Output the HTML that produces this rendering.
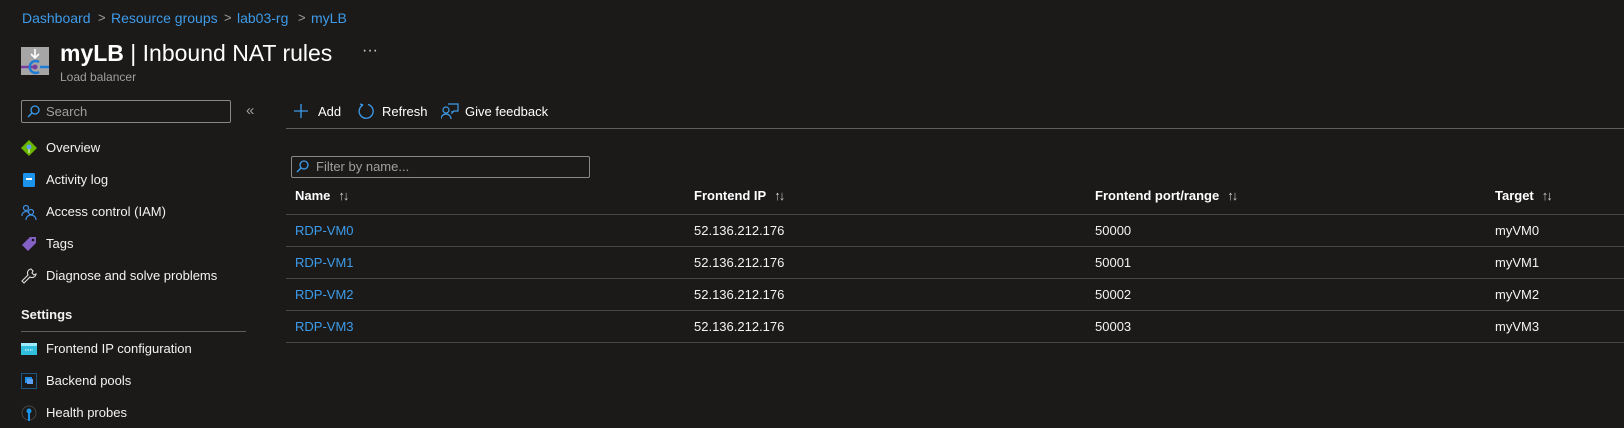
<!DOCTYPE html>
<html><head><meta charset="utf-8"><style>
*{margin:0;padding:0;box-sizing:border-box}
body{width:1624px;height:428px;overflow:hidden;background:#1b1a19;font-family:"Liberation Sans",sans-serif;color:#fff;position:relative;font-size:13px}
.a{position:absolute;white-space:nowrap}
.bc{color:#3d9be9;font-size:14px;top:10px}
.sep{color:#a19f9d;font-size:13px;top:10px}
.nav{left:46px;font-size:13px;color:#f3f2f1}
.ic{position:absolute;left:21px}
.hd{font-weight:bold;top:188px;font-size:13px;color:#fff}
.sort{color:#c8c6c4;font-weight:normal;margin-left:8px;letter-spacing:-2px}
.ln{position:absolute;left:286px;right:0;height:1px;background:#484644}
.c{position:absolute;font-size:13px;color:#f3f2f1}
.lk{color:#3d9be9}
</style></head><body>
<div class="a bc" style="left:22px">Dashboard</div><div class="a sep" style="left:98px">&gt;</div>
<div class="a bc" style="left:111px">Resource groups</div><div class="a sep" style="left:224px">&gt;</div>
<div class="a bc" style="left:237px">lab03-rg</div><div class="a sep" style="left:298px">&gt;</div>
<div class="a bc" style="left:311px">myLB</div>

<svg class="ic" style="top:47px" width="28" height="28" viewBox="0 0 28 28"><rect width="28" height="28" fill="#a6a6a6"/><path d="M14 2v9M10 7l4 4 4-4" stroke="#fff" stroke-width="1.6" fill="none"/><path d="M0 20h14" stroke="#773ea0" stroke-width="2.5"/><path d="M19 20h9" stroke="#1e7bd6" stroke-width="2.5"/><path d="M18 15a6 6 0 1 0 0 10" stroke="#1e7bd6" stroke-width="2.5" fill="none"/><circle cx="14" cy="20" r="2.5" fill="#773ea0"/></svg>
<div class="a" style="left:60px;top:40px;font-size:23px"><b>myLB</b> | Inbound NAT rules</div>
<div class="a" style="left:362px;top:42px;font-size:16px;color:#d0d0d0">···</div>
<div class="a" style="left:60px;top:70px;font-size:12px;color:#a19f9d">Load balancer</div>

<div class="a" style="left:21px;top:100px;width:210px;height:23px;border:1px solid #8a8886;border-radius:2px"></div>
<svg class="a" style="left:27px;top:105px" width="13" height="13"><circle cx="8" cy="5" r="4" stroke="#3d9be9" fill="none" stroke-width="1.3"/><path d="M5 8L1 12" stroke="#3d9be9" stroke-width="1.4"/></svg>
<div class="a" style="left:46px;top:104px;color:#a19f9d">Search</div>
<div class="a" style="left:246px;top:102px;color:#a19f9d;font-size:15px">«</div>

<svg class="ic" style="top:140px" width="16" height="16"><path d="M8 0L16 8 8 16 0 8z" fill="#6bb700"/><circle cx="8" cy="7" r="2.5" fill="#5ea0ef"/><path d="M8 9v4" stroke="#fff"/></svg>
<div class="a nav" style="top:140px">Overview</div>
<svg class="ic" style="top:172px" width="16" height="16"><rect x="2" y="1" width="12" height="14" rx="1.5" fill="#1b93eb"/><rect x="5" y="6" width="6" height="2" fill="#fff"/></svg>
<div class="a nav" style="top:172px">Activity log</div>
<svg class="ic" style="top:204px" width="16" height="16" fill="none" stroke="#3d8fe0" stroke-width="1.2"><circle cx="5" cy="4" r="2.5"/><path d="M1 12a4 4 0 0 1 7 -3"/><circle cx="10" cy="8" r="2.5"/><path d="M5 16a5 5 0 0 1 10 0"/></svg>
<div class="a nav" style="top:204px">Access control (IAM)</div>
<svg class="ic" style="top:236px" width="16" height="16"><path d="M1 9L9 1h6v6l-8 8z" fill="#8661c5"/><circle cx="12" cy="4" r="1.3" fill="#1b1a19"/></svg>
<div class="a nav" style="top:236px">Tags</div>
<svg class="ic" style="top:268px" width="16" height="16" fill="none" stroke="#ddd" stroke-width="1.1"><path d="M10 1a4 4 0 0 0 -3 6L1 13l2 2 6-6a4 4 0 0 0 6-3l-2 1-2-2 1-2z"/></svg>
<div class="a nav" style="top:268px">Diagnose and solve problems</div>
<div class="a" style="left:21px;top:307px;font-weight:bold;color:#f3f2f1">Settings</div>
<div class="a" style="left:21px;top:331px;width:225px;height:1px;background:#605e5c"></div>
<svg class="ic" style="top:341px" width="16" height="16"><rect x="0" y="2" width="16" height="12" fill="#32bedd"/><rect x="0" y="2" width="16" height="3" fill="#9cebff"/><path d="M4 9h8" stroke="#fff" stroke-dasharray="1.5 1"/></svg>
<div class="a nav" style="top:341px">Frontend IP configuration</div>
<svg class="ic" style="top:373px" width="16" height="16"><rect x="0.5" y="0.5" width="15" height="15" fill="none" stroke="#1b93eb" stroke-dasharray="1 1"/><rect x="4" y="4" width="7" height="6" fill="#1b93eb"/><rect x="6" y="6" width="6" height="5" fill="#5ea0ef"/></svg>
<div class="a nav" style="top:373px">Backend pools</div>
<svg class="ic" style="top:405px" width="16" height="16"><circle cx="8" cy="8" r="7" fill="none" stroke="#444"/><circle cx="8" cy="6" r="2.5" fill="#1b93eb"/><path d="M8 8v8" stroke="#1b93eb" stroke-width="2"/></svg>
<div class="a nav" style="top:405px">Health probes</div>

<svg class="a" style="left:294px;top:104px" width="14" height="14" stroke="#3d9be9" stroke-width="1.3"><path d="M7 0v14M0 7h14"/></svg>
<div class="a" style="left:318px;top:104px">Add</div>
<svg class="a" style="left:358px;top:103px" width="16" height="16" fill="none" stroke="#3d9be9" stroke-width="1.3"><path d="M5 2A7 7 0 1 0 10 1.5"/><path d="M5 2L2 1"/></svg>
<div class="a" style="left:382px;top:104px">Refresh</div>
<svg class="a" style="left:441px;top:103px" width="18" height="16" fill="none" stroke="#3d9be9" stroke-width="1.2"><circle cx="5" cy="7" r="3"/><path d="M0 16a5 5 0 0 1 10 0"/><path d="M7 1h10v7h-4l-2 2v-2"/></svg>
<div class="a" style="left:465px;top:104px">Give feedback</div>
<div class="ln" style="top:128px;background:#605e5c"></div>

<div class="a" style="left:291px;top:156px;width:299px;height:22px;border:1px solid #8a8886;border-radius:2px"></div>
<svg class="a" style="left:296px;top:160px" width="13" height="13"><circle cx="8" cy="5" r="4" stroke="#3d9be9" fill="none" stroke-width="1.3"/><path d="M5 8L1 12" stroke="#3d9be9" stroke-width="1.4"/></svg>
<div class="a" style="left:316px;top:159px;color:#a19f9d">Filter by name...</div>

<div class="a hd" style="left:295px">Name<span class="sort">↑↓</span></div>
<div class="a hd" style="left:694px">Frontend IP<span class="sort">↑↓</span></div>
<div class="a hd" style="left:1095px">Frontend port/range<span class="sort">↑↓</span></div>
<div class="a hd" style="left:1495px">Target<span class="sort">↑↓</span></div>
<div class="ln" style="top:214px"></div>
<div class="ln" style="top:246px"></div>
<div class="ln" style="top:278px"></div>
<div class="ln" style="top:310px"></div>
<div class="ln" style="top:342px"></div>

<div class="c lk" style="left:295px;top:223px">RDP-VM0</div><div class="c" style="left:694px;top:223px">52.136.212.176</div><div class="c" style="left:1095px;top:223px">50000</div><div class="c" style="left:1495px;top:223px">myVM0</div>
<div class="c lk" style="left:295px;top:255px">RDP-VM1</div><div class="c" style="left:694px;top:255px">52.136.212.176</div><div class="c" style="left:1095px;top:255px">50001</div><div class="c" style="left:1495px;top:255px">myVM1</div>
<div class="c lk" style="left:295px;top:287px">RDP-VM2</div><div class="c" style="left:694px;top:287px">52.136.212.176</div><div class="c" style="left:1095px;top:287px">50002</div><div class="c" style="left:1495px;top:287px">myVM2</div>
<div class="c lk" style="left:295px;top:319px">RDP-VM3</div><div class="c" style="left:694px;top:319px">52.136.212.176</div><div class="c" style="left:1095px;top:319px">50003</div><div class="c" style="left:1495px;top:319px">myVM3</div>
</body></html>
